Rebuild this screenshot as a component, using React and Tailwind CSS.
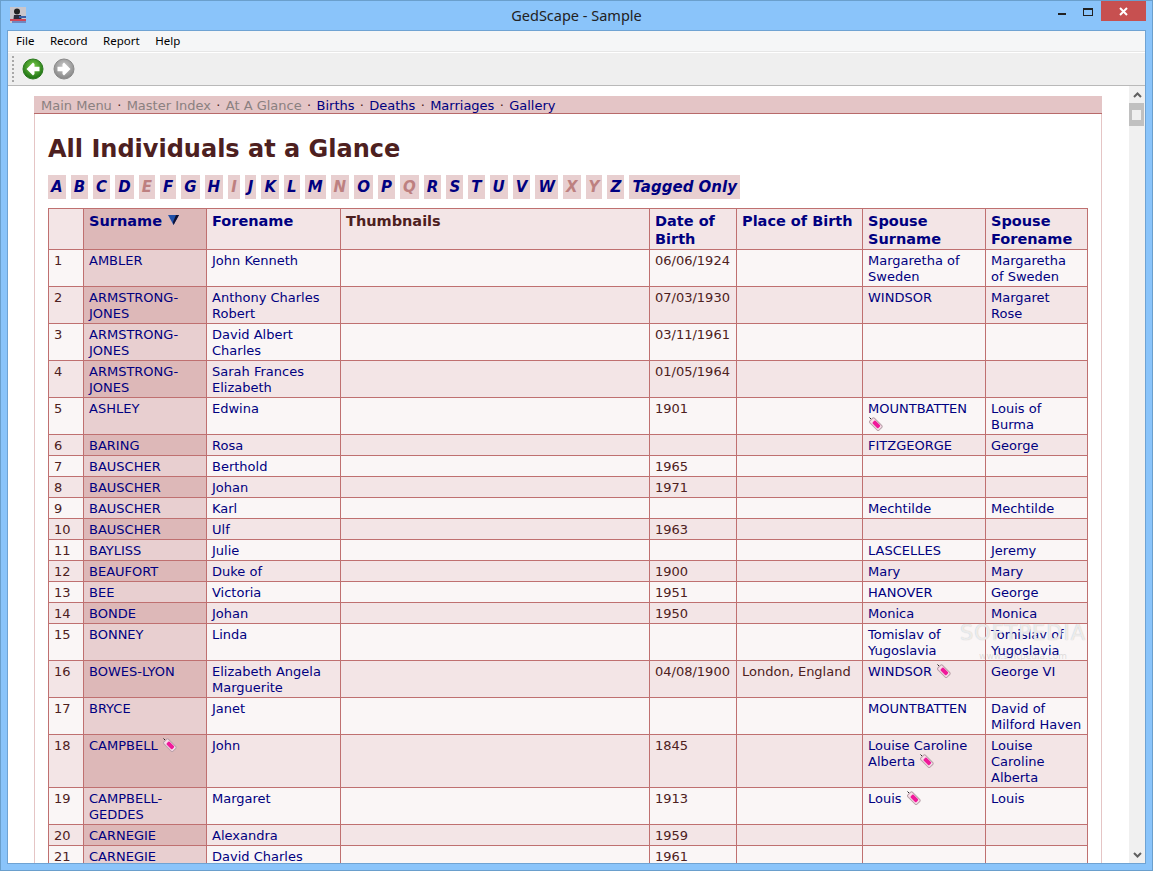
import React from 'react'

const letters = [
  ['A', 1], ['B', 1], ['C', 1], ['D', 1], ['E', 0], ['F', 1], ['G', 1], ['H', 1], ['I', 0], ['J', 1], ['K', 1], ['L', 1], ['M', 1],
  ['N', 0], ['O', 1], ['P', 1], ['Q', 0], ['R', 1], ['S', 1], ['T', 1], ['U', 1], ['V', 1], ['W', 1], ['X', 0], ['Y', 0], ['Z', 1],
]

const rows = [
  { sur: 'AMBLER', fore: 'John Kenneth', date: '06/06/1924', sps: 'Margaretha of Sweden', spf: 'Margaretha of Sweden' },
  { sur: 'ARMSTRONG-JONES', fore: 'Anthony Charles Robert', date: '07/03/1930', sps: 'WINDSOR', spf: 'Margaret Rose' },
  { sur: 'ARMSTRONG-JONES', fore: 'David Albert Charles', date: '03/11/1961' },
  { sur: 'ARMSTRONG-JONES', fore: 'Sarah Frances Elizabeth', date: '01/05/1964' },
  { sur: 'ASHLEY', fore: 'Edwina', date: '1901', sps: 'MOUNTBATTEN', spsTag: true, spf: 'Louis of Burma' },
  { sur: 'BARING', fore: 'Rosa', sps: 'FITZGEORGE', spf: 'George' },
  { sur: 'BAUSCHER', fore: 'Berthold', date: '1965' },
  { sur: 'BAUSCHER', fore: 'Johan', date: '1971' },
  { sur: 'BAUSCHER', fore: 'Karl', sps: 'Mechtilde', spf: 'Mechtilde' },
  { sur: 'BAUSCHER', fore: 'Ulf', date: '1963' },
  { sur: 'BAYLISS', fore: 'Julie', sps: 'LASCELLES', spf: 'Jeremy' },
  { sur: 'BEAUFORT', fore: 'Duke of', date: '1900', sps: 'Mary', spf: 'Mary' },
  { sur: 'BEE', fore: 'Victoria', date: '1951', sps: 'HANOVER', spf: 'George' },
  { sur: 'BONDE', fore: 'Johan', date: '1950', sps: 'Monica', spf: 'Monica' },
  { sur: 'BONNEY', fore: 'Linda', sps: 'Tomislav of Yugoslavia', spf: 'Tomislav of Yugoslavia' },
  { sur: 'BOWES-LYON', fore: 'Elizabeth Angela Marguerite', date: '04/08/1900', place: 'London, England', sps: 'WINDSOR', spsTag: true, spf: 'George VI' },
  { sur: 'BRYCE', fore: 'Janet', sps: 'MOUNTBATTEN', spf: 'David of Milford Haven' },
  { sur: 'CAMPBELL', surTag: true, fore: 'John', date: '1845', sps: 'Louise Caroline Alberta', spsTag: true, spf: 'Louise Caroline Alberta' },
  { sur: 'CAMPBELL-GEDDES', fore: 'Margaret', date: '1913', sps: 'Louis', spsTag: true, spf: 'Louis' },
  { sur: 'CARNEGIE', fore: 'Alexandra', date: '1959' },
  { sur: 'CARNEGIE', fore: 'David Charles', date: '1961' },
]

function Tag() {
  return (
    <svg width="14" height="14" viewBox="0 0 14 14" className="inline-block align-[2px] ml-[1px] -my-[4px]">
      <path d="M0.5 0.5 L3 3" stroke="#222" strokeWidth="1" />
      <rect x="0.5" y="4" width="13" height="6.5" rx="1.5" fill="#f8dce8" stroke="#b8a0a8" strokeWidth="1" transform="rotate(45 7 7)" />
      <rect x="3.5" y="5" width="8" height="4" rx="1" fill="#f0189a" transform="rotate(45 7 7)" />
    </svg>
  )
}

function NavArrow({ id, from, to, edge, flip }) {
  return (
    <svg width="22" height="22" viewBox="0 0 22 22">
      <defs>
        <radialGradient id={id} cx="50%" cy="38%" r="62%">
          <stop offset="0%" stopColor={from} />
          <stop offset="100%" stopColor={to} />
        </radialGradient>
      </defs>
      <circle cx="11" cy="11" r="10" fill={'url(#' + id + ')'} stroke={edge} strokeWidth="1" />
      <path
        d="M4.5 11 L11 4.5 L12.5 6 L12.5 8.8 L17.5 8.8 L17.5 13.2 L12.5 13.2 L12.5 16 L11 17.5 Z"
        fill="#fff"
        transform={flip ? 'rotate(180 11 11)' : undefined}
      />
    </svg>
  )
}

function Cell({ children, className = '' }) {
  return <td className={'border border-[#bf7070] px-[5px] pt-[3px] pb-[1px] align-top ' + className}>{children}</td>
}

function Link({ children }) {
  return <a className="text-[#000080]">{children}</a>
}

function Dot() {
  return <span className="text-[#4d2020] mx-[1.2px]"> · </span>
}

export default function App() {
  return (
    <div className="h-[871px] overflow-hidden flex flex-col bg-[#8ac4fa] border border-[#6a9fcc] font-['Noto_Sans',sans-serif]">

      {/* Title bar */}
      <div className="h-[29px] shrink-0 grid grid-cols-[1fr_auto_1fr] items-start">
        <div className="pl-[9px] pt-[6px]">
          <svg width="16" height="16" viewBox="0 0 16 16" className="block">
            <rect width="16" height="16" fill="#c9c6cc" />
            <circle cx="7" cy="4.5" r="3" fill="#222" />
            <path d="M3 16 L4 8 L11 8 L12 16 Z" fill="#2c2c3c" />
            <rect x="9" y="9" width="7" height="2" fill="#3a60a8" />
            <rect x="0" y="12" width="16" height="2" fill="#d04858" />
            <rect x="2" y="14" width="14" height="2" fill="#7088c0" />
          </svg>
        </div>
        <div className="pt-[4px] text-[14.5px] leading-5 text-[#222]">GedScape - Sample</div>
        <div className="flex justify-end items-start pr-[6px]">
          <div className="w-[26px] h-[20px] flex justify-center pt-[12px]"><div className="w-[8px] h-[2px] bg-[#222]" /></div>
          <div className="w-[26px] h-[20px] flex justify-center pt-[7px]"><div className="w-[10px] h-[8px] border border-[#222] border-t-[2px]" /></div>
          <div className="w-[45px] h-[20px] bg-[#c75050] flex items-center justify-center">
            <svg width="9" height="9" viewBox="0 0 9 9"><path d="M1 1 L8 8 M8 1 L1 8" stroke="#fff" strokeWidth="2" /></svg>
          </div>
        </div>
      </div>

      {/* Client area */}
      <div className="flex-1 min-h-0 mx-[6px] mb-[6px] border border-[#6fa3d3] flex flex-col bg-white">
        <div className="h-[21px] shrink-0 flex items-center gap-[15.5px] pl-[8px] pb-[1px] bg-[#f5f6f7] border-b border-[#e6e6e6] text-[11.5px] text-black">
          <span>File</span>
          <span>Record</span>
          <span>Report</span>
          <span>Help</span>
        </div>
        <div className="h-[34px] shrink-0 flex items-center bg-[#efefef] border-t border-white border-b border-b-[#b9b9b9] pl-[4px] pb-[1px]">
          <div className="h-[26px] w-0 border-l-2 border-dotted border-[#a8a8a8]" />
          <div className="ml-[8px] flex items-center gap-[9px]">
            <NavArrow id="back" from="#7cd04a" to="#1a6e12" edge="#2d7a20" />
            <NavArrow id="forward" from="#cccccc" to="#858585" edge="#8a8a8a" flip />
          </div>
        </div>

        <div className="flex-1 min-h-0 flex relative">
          <div className="flex-1 min-w-0 overflow-hidden pl-[26px] pr-[27px] pt-[10px] font-['DejaVu_Sans',sans-serif] text-[13px] leading-4 text-[#4d2020]">
            <div className="border-x border-[#e5c5c5] min-h-[800px]">
              <div className="h-[18px] bg-[#e4c5c6] border-b border-[#b86a6a] pl-[7px] pt-[2px] leading-[15px] -mx-px text-[#8a8080] whitespace-pre">
                <span>Main Menu</span><Dot />
                <span>Master Index</span><Dot />
                <span>At A Glance</span><Dot />
                <Link>Births</Link><Dot />
                <Link>Deaths</Link><Dot />
                <Link>Marriages</Link><Dot />
                <Link>Gallery</Link>
              </div>

              <div className="pl-[13px]">
                <h1 className="mt-[19px] text-[24px] leading-[32px] font-bold text-[#4d2020]">All Individuals at a Glance</h1>

                <div className="mt-[10px] flex gap-[5.04px] text-[15px] leading-6 font-bold italic">
                  {letters.map(([l, on]) => (
                    <span key={l} className={'px-[3px] bg-[#e8cfd0] ' + (on ? 'text-[#000080]' : 'text-[#bd8080]')}>{l}</span>
                  ))}
                  <span className="px-[3px] bg-[#e8cfd0] text-[#000080]">Tagged Only</span>
                </div>

                <table className="mt-[9px] table-fixed border-collapse w-[1039px]">
                  <colgroup>
                    <col className="w-[35px]" />
                    <col className="w-[123px]" />
                    <col className="w-[134px]" />
                    <col className="w-[309px]" />
                    <col className="w-[87px]" />
                    <col className="w-[126px]" />
                    <col className="w-[123px]" />
                    <col className="w-[102px]" />
                  </colgroup>
                  <thead>
                    <tr className="bg-[#f3e5e6] text-[14.5px] leading-[18px] font-bold text-left">
                      <Cell />
                      <Cell className="bg-[#ddb8b8]">
                        <Link>Surname</Link>
                        <svg width="11" height="10" viewBox="0 0 11 10" className="inline-block ml-[6px] align-[1px]">
                          <path d="M0 0 H11 L5.5 10 Z" fill="#1f4fa8" />
                          <path d="M5.5 10 L11 0 H8 L5 7 Z" fill="#101030" />
                        </svg>
                      </Cell>
                      <Cell><Link>Forename</Link></Cell>
                      <Cell>Thumbnails</Cell>
                      <Cell><Link>Date of Birth</Link></Cell>
                      <Cell><Link>Place of Birth</Link></Cell>
                      <Cell><Link>Spouse Surname</Link></Cell>
                      <Cell><Link>Spouse Forename</Link></Cell>
                    </tr>
                  </thead>
                  <tbody>
                    {rows.map((r, i) => (
                      <tr key={i} className={i % 2 ? 'bg-[#f3e5e6]' : 'bg-[#faf6f6]'}>
                        <Cell>{i + 1}</Cell>
                        <Cell className={i % 2 ? 'bg-[#ddb8b8]' : 'bg-[#e8cfd0]'}>
                          <Link>{r.sur}</Link>{r.surTag && <> <Tag /></>}
                        </Cell>
                        <Cell><Link>{r.fore}</Link></Cell>
                        <Cell />
                        <Cell>{r.date}</Cell>
                        <Cell>{r.place}</Cell>
                        <Cell><Link>{r.sps}</Link>{r.spsTag && <> <Tag /></>}</Cell>
                        <Cell><Link>{r.spf}</Link></Cell>
                      </tr>
                    ))}
                  </tbody>
                </table>
              </div>
            </div>
          </div>

          {/* Scrollbar */}
          <div className="w-[16px] shrink-0 bg-[#f0f0f0] flex flex-col">
            <div className="h-[17px] flex items-center justify-center">
              <svg width="9" height="6" viewBox="0 0 9 6"><path d="M1 5 L4.5 1.5 L8 5" fill="none" stroke="#606060" strokeWidth="2" /></svg>
            </div>
            <div className="h-[23px] w-[15px] bg-[#c0c0c0] flex items-center justify-center">
              <div className="w-[9px] h-[10px] bg-[#efefef]" />
            </div>
            <div className="flex-1" />
            <div className="h-[16px] flex items-center justify-center">
              <svg width="9" height="6" viewBox="0 0 9 6"><path d="M1 1 L4.5 4.5 L8 1" fill="none" stroke="#606060" strokeWidth="2" /></svg>
            </div>
          </div>

          {/* Watermark */}
          <div className="absolute left-[952px] top-[535px] text-center font-['DejaVu_Sans',sans-serif] pointer-events-none">
            <div className="text-[21px] leading-6 tracking-[1px] text-white/70 [text-shadow:0_0_1px_#bbb]">SOFTPEDIA</div>
            <div className="mt-[5px] text-[9px] leading-3 text-[#999]/30">www.softpedia.com</div>
          </div>
        </div>
      </div>
    </div>
  )
}
